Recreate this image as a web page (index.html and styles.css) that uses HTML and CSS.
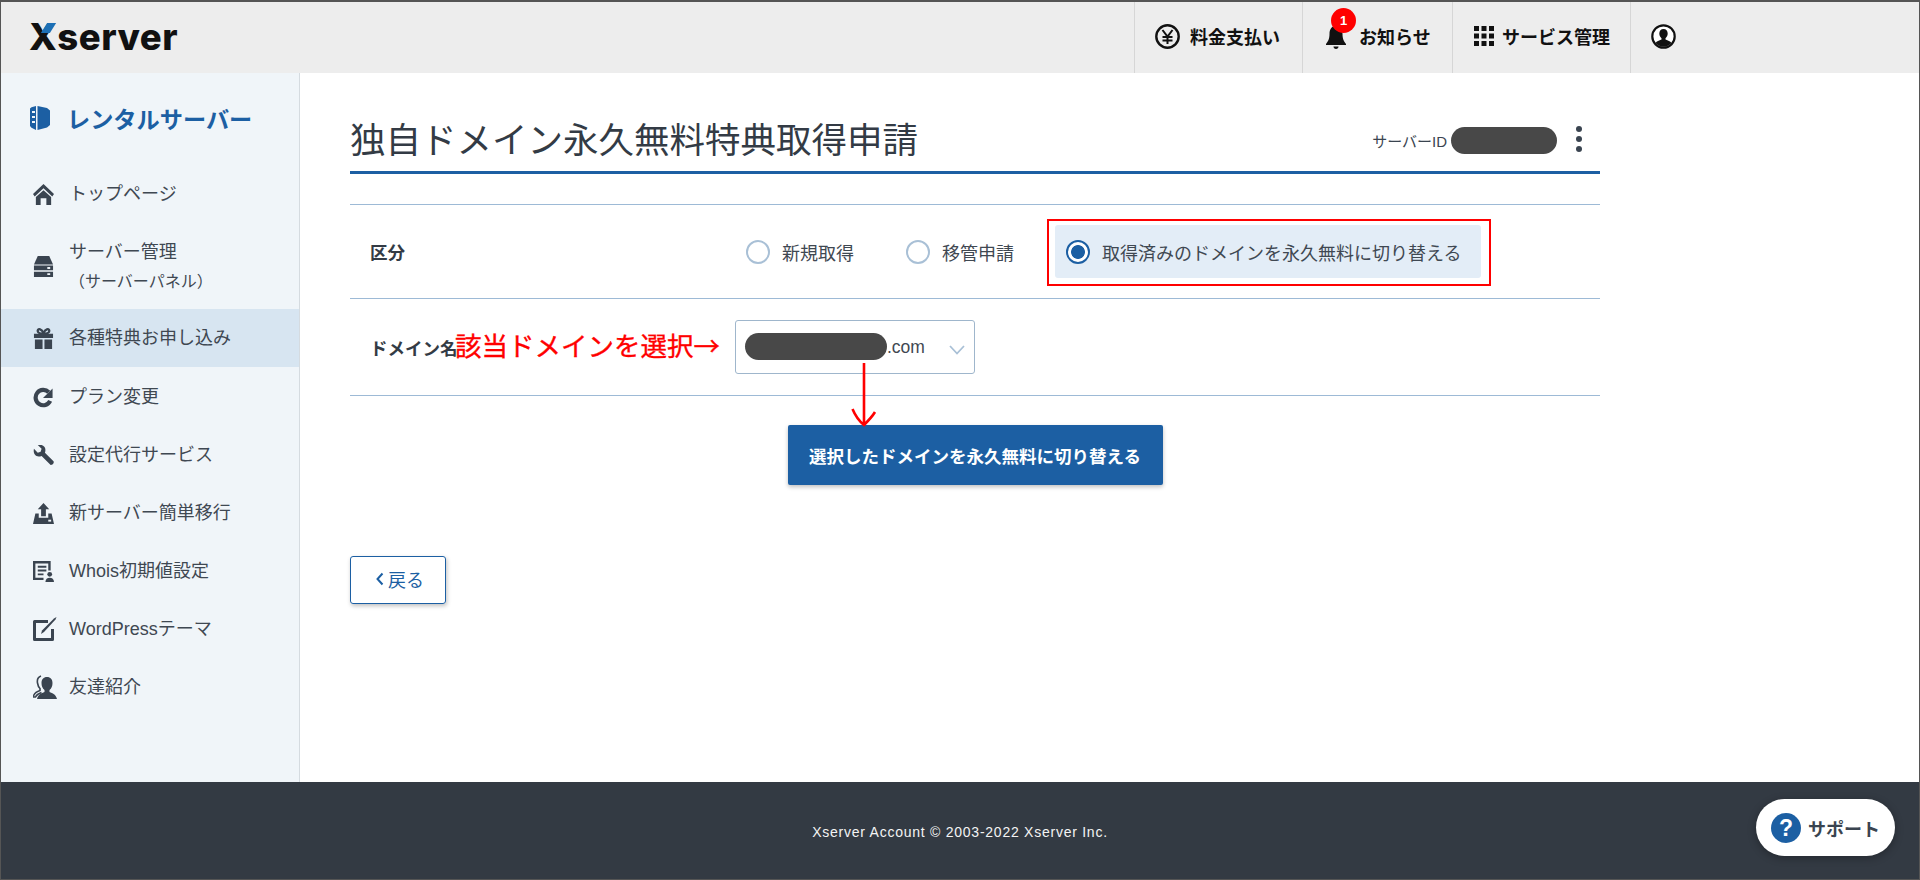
FILE: index.html
```html
<!DOCTYPE html>
<html lang="ja">
<head>
<meta charset="utf-8">
<title>独自ドメイン永久無料特典取得申請</title>
<link rel="stylesheet" href="styles.css">
</head>
<body>
<div class="frame">
  <header class="topbar">
    <div class="logo">Xserver<span class="logo-accent"></span></div>
    <nav class="topnav">
      <a class="topnav-item pay">
        <svg class="ico-25" viewBox="0 0 25 25"><circle cx="12.500" cy="12.500" r="11.200" fill="none" stroke="#111" stroke-width="2.400"/><path d="M7.500 6l5 6.500 5-6.500M12.500 12.500V20M7.500 13h10M7.500 16.500h10" fill="none" stroke="#111" stroke-width="2"/></svg>
        <span>料金支払い</span>
      </a>
      <a class="topnav-item notice">
        <svg class="ico-bell" viewBox="0 0 22 24"><path d="M11 1c4.500 0 6.500 3.500 6.500 8 0 5 1.500 7.500 3.500 10v1H1v-1c2-2.500 3.500-5 3.500-10C4.500 4.500 6.500 1 11 1z" fill="#111"/><path d="M8.500 21.500h5c0 1.500-1 2.500-2.500 2.500s-2.500-1-2.500-2.500z" fill="#111"/></svg>
        <span>お知らせ</span>
        <b class="badge">1</b>
      </a>
      <a class="topnav-item service">
        <svg class="ico-grid" viewBox="0 0 20 20" fill="#111"><path d="M0 0h5v5H0zM7.500 0h5v5h-5zM15 0h5v5h-5zM0 7.500h5v5H0zM7.500 7.500h5v5h-5zM15 7.500h5v5h-5zM0 15h5v5H0zM7.500 15h5v5h-5zM15 15h5v5h-5z"/></svg>
        <span>サービス管理</span>
      </a>
      <a class="topnav-item user">
        <svg class="ico-25" viewBox="0 0 25 25"><circle cx="12.500" cy="12.500" r="11.200" fill="#fff" stroke="#111" stroke-width="2.200"/><path d="M12.500 5c2.600 0 4.200 2 4.200 4.500 0 2-1 3.700-2.200 4.700v1.300c2.500.8 4.800 1.800 6 3.500a10.500 10.500 0 0 1-16 0c1.200-1.700 3.500-2.700 6-3.500v-1.300c-1.200-1-2.200-2.700-2.200-4.700C8.300 7 9.900 5 12.500 5z" fill="#111"/></svg>
      </a>
    </nav>
  </header>

  <div class="body-row">
    <aside class="sidebar">
      <div class="side-head">
        <svg class="ico-book" viewBox="0 0 20 24"><path d="M6 0L1.500 1.200 0 2.500V20l1.500 1.700L6 24z" fill="#1c5fa3"/><path d="M7.500 0L17 2l3 2.500V19l-3 2.500L7.500 24z" fill="#1c5fa3"/><path d="M2 6h3M2 11h3M2 16h3" stroke="#f0f5f9" stroke-width="1.800"/></svg>
        <span>レンタルサーバー</span>
      </div>
      <ul class="side-list">
        <li class="side-item">
          <svg class="ico" viewBox="0 0 22 22"><path d="M11 0L0 10.500 1.800 13 11 4.500 20.200 13 22 10.500z" fill="#3a4450"/><path d="M3 13.500L11 6.500l8 7V22h-5v-7H8v7H3z" fill="#3a4450"/></svg>
          <span>トップページ</span>
        </li>
        <li class="side-item side-item-tall">
          <svg class="ico" viewBox="0 0 22 22"><path d="M5 0h12l4 9H1z" fill="#3a4450"/><path d="M1 10h20v5H1zM1 16.500h20V22H1z" fill="#3a4450"/><path d="M15 12.500h3M15 19h3" stroke="#f0f5f9" stroke-width="2"/></svg>
          <span>サーバー管理<small class="side-sub">（サーバーパネル）</small></span>
        </li>
        <li class="side-item active">
          <svg class="ico" viewBox="0 0 22 22"><path d="M1 6h20v4.500H1zM2 12h8v10H2zM12 12h8v10h-8z" fill="#3a4450"/><path d="M10.500 6C7 6 4.500 4.800 5 2.500 5.500.5 9 .5 11 5.500 13 .5 16.500.5 17 2.500 17.500 4.800 15 6 11.500 6" fill="none" stroke="#3a4450" stroke-width="2.400"/></svg>
          <span>各種特典お申し込み</span>
        </li>
        <li class="side-item">
          <svg class="ico" viewBox="0 0 22 22"><path d="M18 14.500A8 8 0 1 1 16.500 5.500" fill="none" stroke="#3a4450" stroke-width="4.400"/><path d="M20.500 1.500v10h-10z" fill="#3a4450"/></svg>
          <span>プラン変更</span>
        </li>
        <li class="side-item">
          <svg class="ico" viewBox="0 0 22 22"><path d="M1 4l4 4 3-1 1-3-4-4c4-1 8 1 8 5 0 1 0 2-.5 3l9 9c1 2-1 4-3 4l-9.500-9.500c-1 .5-2 .500-3 .500-4 0-6-4-5-8z" fill="#3a4450"/></svg>
          <span>設定代行サービス</span>
        </li>
        <li class="side-item">
          <svg class="ico" viewBox="0 0 22 22"><path d="M11 0l6 6.500h-3.500V14h-5V6.500H5z" fill="#3a4450"/><path d="M2.500 11H6v4.500h10V11h3.500L22 22H0z" fill="#3a4450"/><path d="M16 18.500h3" stroke="#f0f5f9" stroke-width="2"/></svg>
          <span>新サーバー簡単移行</span>
        </li>
        <li class="side-item">
          <svg class="ico" viewBox="0 0 22 22"><path d="M0 0h18.500v10h-2.500V2.500H2.500v15H11V20H0z" fill="#3a4450"/><path d="M5 6h9M5 10h9M5 14h6" stroke="#3a4450" stroke-width="2"/><circle cx="17.500" cy="14" r="2.500" fill="#3a4450"/><path d="M13 22c0-3 2-4.500 4.500-4.500S22 19 22 22z" fill="#3a4450"/></svg>
          <span>Whois初期値設定</span>
        </li>
        <li class="side-item">
          <svg class="ico ico-wp" viewBox="0 0 24 24"><path d="M15 4.500H1.500v18h18V12" fill="none" stroke="#3a4450" stroke-width="3" stroke-linejoin="round"/><path d="M8 17l1-3.500L21 1.500 23.500 0 22.500 2.500 11 15z" fill="#3a4450"/></svg>
          <span>WordPressテーマ</span>
        </li>
        <li class="side-item">
          <svg class="ico ico-wide" viewBox="0 0 24 24"><path d="M14 2c3.500 0 5.500 2.500 5.500 6 0 3-1 5.500-3 7v2c3 1 6.500 2.500 7.500 7H4c1-4.500 4.500-6 7.500-7v-2c-2-1.500-3-4-3-7 0-3.500 2-6 5.500-6z" fill="#3a4450"/><path d="M8 1C5 2 4 5 4.500 8c.3 2 1 4 2.500 5.500v2C4 16.500 1 18.500 0 22h2.500c1-2 3-3.500 6-4.500" fill="none" stroke="#3a4450" stroke-width="1.600"/></svg>
          <span>友達紹介</span>
        </li>
      </ul>
    </aside>

    <main class="content">
      <div class="title-row">
        <h1 class="title">独自ドメイン永久無料特典取得申請</h1>
        <div class="server-id">
          <span>サーバーID</span>
          <span class="redact redact-id"></span>
          <span class="kebab"><i></i><i></i><i></i></span>
        </div>
      </div>

      <section class="form">
        <div class="form-row">
          <div class="form-label">区分</div>
          <div class="radios">
            <label class="radio"><span class="radio-mark"></span>新規取得</label>
            <label class="radio"><span class="radio-mark"></span>移管申請</label>
            <label class="radio radio-on"><span class="radio-mark"></span>取得済みのドメインを永久無料に切り替える</label>
          </div>
        </div>
        <div class="form-row form-row-2">
          <div class="form-label">ドメイン名</div>
          <div class="select">
            <span class="redact redact-domain"></span><span class="select-tld">.com</span>
            <svg class="chev" viewBox="0 0 16 10"><path d="M1 1l7 7.500L15 1" fill="none" stroke="#a9c0d6" stroke-width="1.800"/></svg>
          </div>
        </div>
      </section>

      <div class="submit-row"><a class="btn-primary">選択したドメインを永久無料に切り替える</a></div>
      <a class="btn-back">
        <svg class="back-chev" viewBox="0 0 8 14"><path d="M6.500 1.500L1.500 7l5 5.500" fill="none" stroke="#1c5fa3" stroke-width="2"/></svg>戻る
      </a>
    </main>
  </div>

  <footer class="footer">
    <span>Xserver Account © 2003-2022 Xserver Inc.</span>
    <a class="support"><span class="support-q">?</span>サポート</a>
  </footer>

  <div class="mark-box"></div>
  <div class="mark-text">該当ドメインを選択→</div>
  <svg class="mark-arrow" viewBox="0 0 28 66"><path d="M14 1v62M2.500 47C5 53 9 59 14 63c4-4 8-8 11-13" fill="none" stroke="#f00" stroke-width="2.600"/></svg>
</div>
</body>
</html>
```
FILE: styles.css
```css
* { box-sizing: border-box; }
html, body { margin: 0; height: 100%; }
body {
  font-family: "Liberation Sans", "Noto Sans CJK JP", sans-serif;
  color: #3a4450;
  background: #fff;
}
.frame {
  position: relative;
  width: 1920px;
  height: 880px;
  border: 1px solid #555;
  border-top-width: 2px;
  display: flex;
  flex-direction: column;
  overflow: hidden;
}

/* top bar */
.topbar {
  flex: none;
  height: 71px;
  background: #ededed;
  display: flex;
  justify-content: space-between;
  padding-left: 28px;
}
.logo {
  position: relative;
  align-self: center;
  margin-top: -2px;
  font-family: Inter, sans-serif;
  font-weight: 800;
  font-size: 36.500px;
  line-height: 40px;
  letter-spacing: .5px;
  color: #111;
}
.logo-accent {
  position: absolute;
  left: 15px;
  top: 6px;
  width: 9px;
  height: 10px;
  background: #1c6fb5;
  transform: skewX(-32deg);
}
.topnav { display: flex; margin-right: 223px; }
.topnav-item {
  position: relative;
  display: flex;
  align-items: center;
  gap: 10px;
  padding: 0 0 3px 20px;
  border-left: 1px solid #d6d6d6;
  font-weight: 700;
  font-size: 18px;
  white-space: nowrap;
  color: #111;
}
.topnav-item.pay { width: 168px; margin-left: -1px; }
.topnav-item.notice { width: 150px; padding-left: 22px; gap: 12px; }
.topnav-item.service { width: 178px; padding-left: 21px; gap: 8px; }
.topnav-item.user { width: 66px; padding-left: 20px; }
.ico-25 { width: 25px; height: 25px; flex: none; }
.ico-bell { width: 22px; height: 24px; flex: none; margin-top: 2px; }
.ico-grid { width: 20px; height: 20px; flex: none; }
.badge {
  position: absolute;
  left: 28px;
  top: 6px;
  width: 25px;
  height: 25px;
  border-radius: 50%;
  background: #f00;
  color: #fff;
  font-size: 13px;
  line-height: 25px;
  text-align: center;
}

/* layout */
.body-row { flex: 1; display: flex; min-height: 0; }
.sidebar {
  flex: none;
  width: 299px;
  background: #f0f5f9;
  border-right: 1px solid #d5dbe0;
}
.side-head {
  height: 91px;
  padding: 0 0 1px 29px;
  display: flex;
  align-items: center;
  gap: 17px;
  font-weight: 700;
  font-size: 23.200px;
  color: #1c5fa3;
}
.ico-book { width: 20px; height: 24px; flex: none; }
.side-list { list-style: none; margin: 0; padding: 0; }
.side-item {
  height: 58px;
  display: flex;
  align-items: center;
  gap: 15px;
  padding: 2px 0 0 32px;
  font-size: 18px;
  line-height: 29px;
  color: #3f4852;
}
.side-item-tall { height: 87px; }
.side-item.active { background: #d7e5f1; padding-top: 0; }
.side-sub { display: block; font-size: 16px; }
.ico { width: 21px; height: 21px; flex: none; }
.ico-wp { width: 24px; height: 24px; margin-right: -3px; }
.ico-wide { width: 24px; height: 24px; margin-right: -3px; }

/* main */
.content { flex: 1; padding: 0 319px 0 50px; min-width: 0; }
.title-row {
  height: 101px;
  padding-bottom: 5px;
  border-bottom: 3px solid #1c5fa3;
  display: flex;
  align-items: flex-end;
  justify-content: space-between;
}
.title {
  margin: 0;
  font-size: 35.500px;
  line-height: 50px;
  font-weight: 400;
  color: #333b45;
}
.server-id {
  display: flex;
  align-items: center;
  font-size: 15px;
  color: #3a4450;
  margin: 0 18px 12px 0;
}
.redact { display: block; background: #484848; border-radius: 14px; }
.redact-id { width: 106px; height: 27px; margin-left: 4px; }
.kebab { display: flex; flex-direction: column; gap: 4px; margin: -3px 0 0 19px; }
.kebab i { display: block; width: 6px; height: 6px; border-radius: 50%; background: #3a4450; }

.form { margin-top: 30px; border-top: 1px solid #9dbad6; }
.form-row {
  height: 94px;
  display: flex;
  align-items: center;
  border-bottom: 1px solid #9dbad6;
}
.form-row-2 { height: 97px; }
.form-label {
  flex: none;
  width: 385px;
  padding-left: 20px;
  font-weight: 700;
  font-size: 17.500px;
  color: #333b45;
}
.radios { display: flex; gap: 30px; }
.radio {
  display: flex;
  align-items: center;
  gap: 12px;
  height: 53px;
  padding: 0 20px 0 11px;
  font-size: 18px;
  color: #3f4852;
  border-radius: 3px;
}
.radio:not(.radio-on) { padding-right: 11px; }
.radio-mark {
  flex: none;
  width: 24px;
  height: 24px;
  border-radius: 50%;
  border: 2px solid #a9c0d6;
  background: #fff;
}
.radio-on { background: #e3edf7; }
.radio-on .radio-mark {
  border-color: #1c5fa3;
  background: radial-gradient(circle, #1c5fa3 0 6.500px, #fff 7.300px);
}
.select {
  width: 240px;
  height: 54px;
  border: 1px solid #9fb6cc;
  border-radius: 3px;
  display: flex;
  align-items: center;
  padding-left: 9px;
  font-size: 17.500px;
  color: #3f4852;
  position: relative;
}
.redact-domain { width: 142px; height: 27px; margin-top: -2px; }
.chev { position: absolute; right: 9px; top: 24px; width: 16px; height: 10px; }

.submit-row { display: flex; justify-content: center; margin-top: 29px; }
.btn-primary {
  width: 375px;
  height: 60px;
  display: flex;
  align-items: center;
  justify-content: center;
  background: #1c5fa3;
  color: #fff;
  border-radius: 2px;
  font-weight: 700;
  font-size: 17.500px;
  box-shadow: 0 2px 4px rgba(0,0,0,.25);
}
.btn-back {
  margin-top: 71px;
  width: 96px;
  height: 48px;
  display: flex;
  align-items: center;
  gap: 4px;
  padding: 0 0 3px 25px;
  border: 1px solid #1c5fa3;
  border-radius: 3px;
  color: #1c5fa3;
  font-size: 18px;
  box-shadow: 1px 2px 4px rgba(0,0,0,.25);
}
.back-chev { width: 8px; height: 14px; flex: none; }

/* footer */
.footer {
  flex: none;
  height: 97px;
  background: #333a43;
  color: #f4f4f4;
  font-size: 14px;
  letter-spacing: .75px;
  display: flex;
  align-items: center;
  justify-content: center;
  padding-top: 3px;
  position: relative;
}
.support {
  position: absolute;
  left: 1755px;
  top: 17px;
  width: 139px;
  height: 57px;
  border-radius: 29px;
  background: #fff;
  color: #3a4450;
  display: flex;
  align-items: center;
  gap: 7px;
  padding-left: 15px;
  font-weight: 700;
  font-size: 18px;
  letter-spacing: 0;
  box-shadow: 0 2px 8px rgba(0,0,0,.3);
}
.support-q {
  width: 30px;
  height: 30px;
  border-radius: 50%;
  background: #1c5fa3;
  color: #fff;
  font-size: 23px;
  font-weight: 700;
  line-height: 30px;
  text-align: center;
}

/* red annotations drawn over the screenshot */
.mark-box {
  position: absolute;
  left: 1046px;
  top: 217px;
  width: 444px;
  height: 67px;
  border: 2px solid #f00;
}
.mark-text {
  position: absolute;
  left: 454px;
  top: 325px;
  font-family: "Noto Sans CJK JP", sans-serif;
  font-size: 26.500px;
  line-height: 36px;
  color: #f00;
  -webkit-text-stroke: .35px #f00;
  white-space: nowrap;
}
.mark-arrow {
  position: absolute;
  left: 849px;
  top: 360px;
  width: 28px;
  height: 66px;
}
```
